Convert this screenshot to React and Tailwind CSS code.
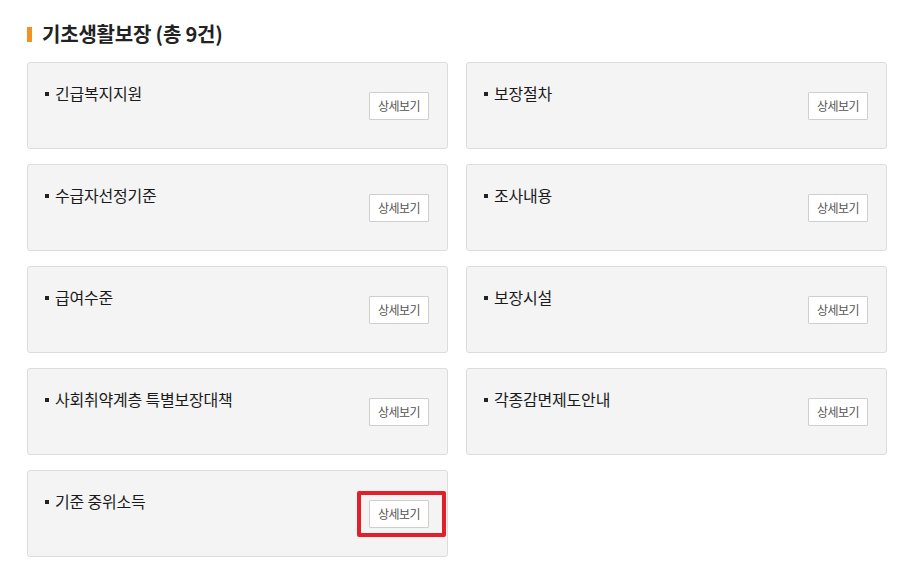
const items = [
  "긴급복지지원",
  "보장절차",
  "수급자선정기준",
  "조사내용",
  "급여수준",
  "보장시설",
  "사회취약계층 특별보장대책",
  "각종감면제도안내",
  "기준 중위소득",
];

function Card({ title, highlight }) {
  return (
    <div className="h-[87px] border border-[#dcdcdc] bg-[#f4f4f4] rounded-[3px] flex justify-between pl-[17px] pr-[18px]">
      <div className="pt-[18px] flex items-start">
        <span className="flex items-center h-6">
          <span className="w-[4px] h-[4px] bg-[#222] mr-[6px] mt-[2px]" />
          <span className="text-[16px] leading-6 text-[#1a1a1a] tracking-[-0.2px]">{title}</span>
        </span>
      </div>
      <div className="pt-[29px] relative">
        <button
          type="button"
          className="w-[60px] h-[28px] bg-white border border-[#cfcfcf] text-[12px] tracking-[-0.5px] text-[#555] rounded-[1px]"
        >
          상세보기
        </button>
        {highlight && (
          <span className="absolute left-[-12px] top-[20px] w-[89px] h-[46px] border-4 border-[#e3202a] rounded-[2px]" />
        )}
      </div>
    </div>
  );
}

export default function App() {
  return (
    <div
      className="w-[914px] h-[588px] bg-white pl-[27px] pt-[23px]"
      style={{ fontFamily: '"Noto Sans CJK KR", "Noto Sans", sans-serif' }}
    >
      {/* 제목 */}
      <div className="flex items-center h-[22px]">
        <span className="w-[5px] h-[15px] bg-[#f39221] mr-[10px] mt-[1px]" />
        <h2 className="text-[20px] font-bold text-[#222] tracking-[-0.2px] leading-[22px]">
          기초생활보장 (총 9건)
        </h2>
      </div>

      {/* 목록 */}
      <div className="mt-[17px] w-[860px] grid grid-cols-2 gap-x-[18px] gap-y-[15px]">
        {items.map((t, i) => (
          <Card key={t} title={t} highlight={i === items.length - 1} />
        ))}
      </div>
    </div>
  );
}
